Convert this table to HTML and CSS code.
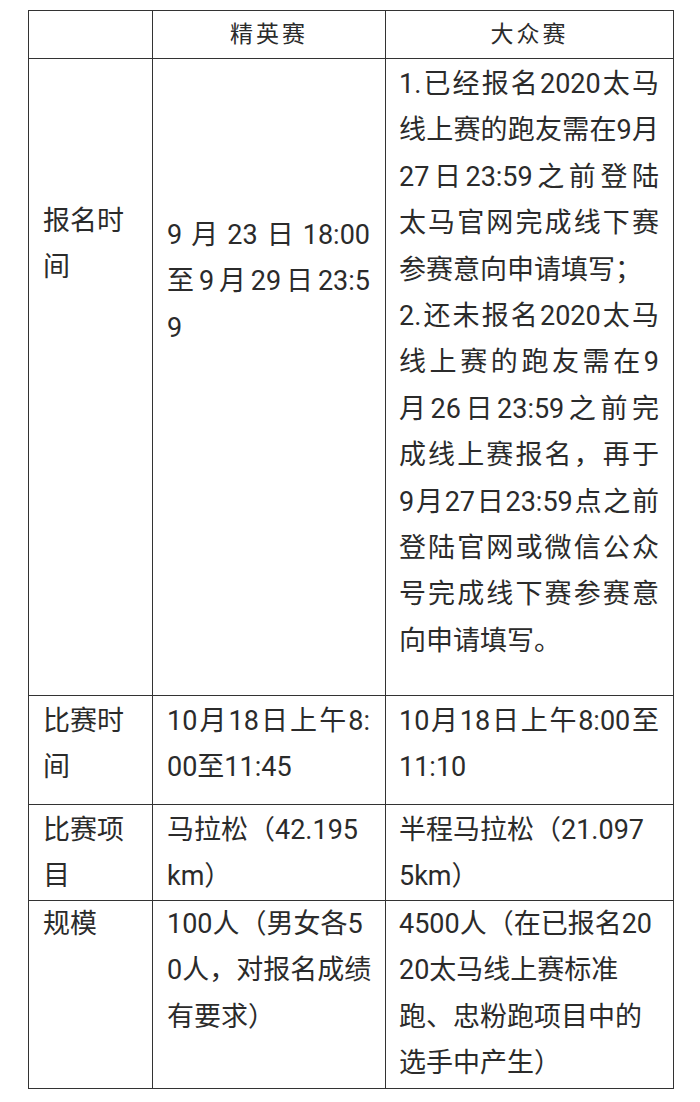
FILE: index.html
```html
<!DOCTYPE html>
<html lang="zh-CN">
<head>
<meta charset="utf-8">
<title>赛事安排</title>
<link rel="stylesheet" href="styles.css">
</head>
<body>
<table class="sched">
  <colgroup><col class="c1"><col class="c2"><col class="c3"></colgroup>
  <tr class="head">
    <th></th>
    <th>精英赛</th>
    <th>大众赛</th>
  </tr>
  <tr class="r1">
    <td class="lab1"><span class="ln">报名时</span><span class="ln">间</span></td>
    <td class="val1"><span class="ln j">9月23日18:00</span><span class="ln j">至9月29日23:5</span><span class="ln">9</span></td>
    <td>
      <span class="ln j">1.已经报名2020太马</span>
      <span class="ln j">线上赛的跑友需在9月</span>
      <span class="ln j">27日23:59之前登陆</span>
      <span class="ln j">太马官网完成线下赛</span>
      <span class="ln">参赛意向申请填写；</span>
      <span class="ln j">2.还未报名2020太马</span>
      <span class="ln j">线上赛的跑友需在9</span>
      <span class="ln j">月26日23:59之前完</span>
      <span class="ln j">成线上赛报名，再于</span>
      <span class="ln j">9月27日23:59点之前</span>
      <span class="ln j">登陆官网或微信公众</span>
      <span class="ln j">号完成线下赛参赛意</span>
      <span class="ln">向申请填写。</span>
    </td>
  </tr>
  <tr class="r2">
    <td><span class="ln">比赛时</span><span class="ln">间</span></td>
    <td><span class="ln j">10月18日上午8:</span><span class="ln">00至11:45</span></td>
    <td><span class="ln j">10月18日上午8:00至</span><span class="ln">11:10</span></td>
  </tr>
  <tr class="r3">
    <td><span class="ln">比赛项</span><span class="ln">目</span></td>
    <td><span class="ln">马拉松（42.195</span><span class="ln">km）</span></td>
    <td><span class="ln">半程马拉松（21.097</span><span class="ln">5km）</span></td>
  </tr>
  <tr class="r4">
    <td><span class="ln">规模</span></td>
    <td><span class="ln">100人（男女各5</span><span class="ln">0人，对报名成绩</span><span class="ln">有要求）</span></td>
    <td><span class="ln">4500人（在已报名20</span><span class="ln">20太马线上赛标准</span><span class="ln">跑、忠粉跑项目中的</span><span class="ln">选手中产生）</span></td>
  </tr>
</table>
</body>
</html>
```

FILE: styles.css
```css
html, body {
  margin: 0;
  padding: 0;
  background: #ffffff;
}

body {
  padding: 10px 0 0 28px;
  font-family: Roboto, "Noto Sans CJK SC", sans-serif;
  color: #2b2b2b;
}

.sched {
  border-collapse: collapse;
  table-layout: fixed;
  width: 645px;
}

.c1 { width: 124px; }
.c2 { width: 233px; }
.c3 { width: 288px; }

.sched th,
.sched td {
  border: 1px solid #333333;
  vertical-align: top;
  text-align: left;
  font-size: 27px;
  line-height: 46.4px;
  padding: 2px 14px 0 13px;
}

.sched td:first-child { padding-left: 14px; }
.sched td:nth-child(2) { padding-left: 14px; padding-right: 15px; }

.sched th {
  vertical-align: middle;
  text-align: center;
  font-weight: normal;
  font-size: 23px;
  letter-spacing: 3px;
  line-height: 30px;
  padding: 0;
}

.head { height: 48px; }
.r1 { height: 637px; }
.r2 { height: 109px; }
.r3 { height: 94px; }
.r4 { height: 188px; }

.sched td.lab1 { padding-top: 139px; }
.sched td.val1 { padding-top: 153px; }

.r4 td { padding-top: 0; }

.ln {
  display: block;
  white-space: nowrap;
}

.ln.j {
  text-align: justify;
  text-align-last: justify;
}
```
